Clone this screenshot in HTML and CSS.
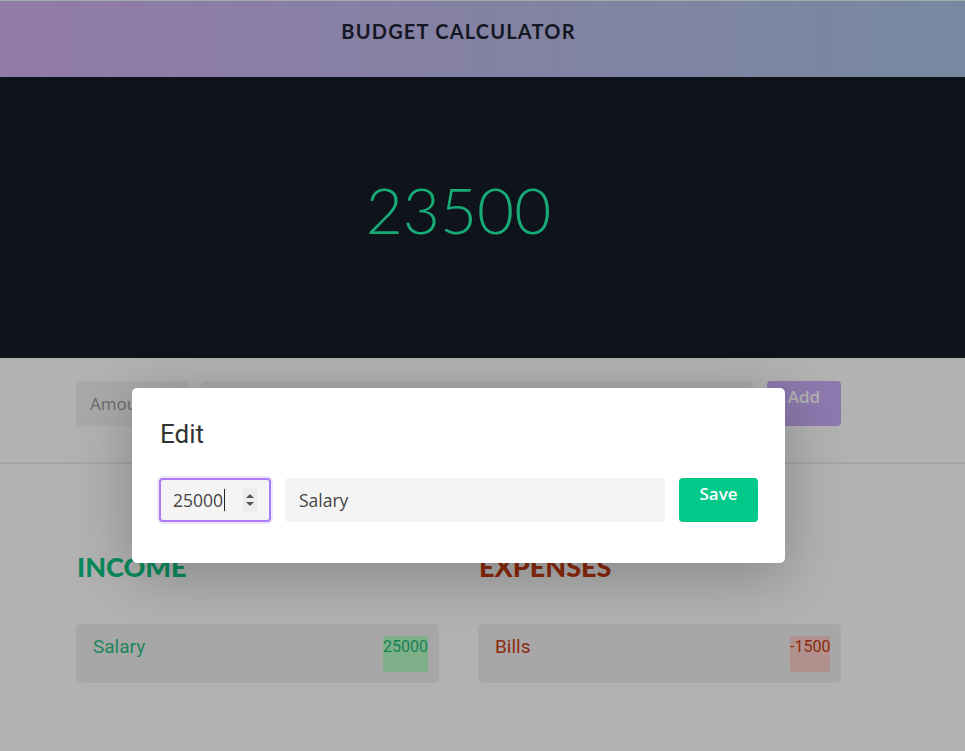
FILE: index.html
```html
<!DOCTYPE html>
<html lang="en">
<head>
<meta charset="utf-8">
<title>Budget Calculator</title>
<link rel="stylesheet" href="styles.css">
</head>
<body>
<header class="topbar">
  <h1 class="title">BUDGET CALCULATOR</h1>
</header>
<section class="hero">
  <div class="total">23500</div>
</section>
<main class="main">
  <form class="add-form">
    <div class="field field-amount"><span class="placeholder">Amount</span></div>
    <div class="field field-desc"></div>
    <div class="btn btn-add">Add</div>
  </form>
  <div class="divider"></div>
  <div class="lists">
    <section class="column">
      <h2 class="heading heading-income">INCOME</h2>
      <div class="card card-income">
        <span class="card-name">Salary</span>
        <span class="badge badge-income">25000</span>
      </div>
    </section>
    <section class="column">
      <h2 class="heading heading-expense">EXPENSES</h2>
      <div class="card card-expense">
        <span class="card-name">Bills</span>
        <span class="badge badge-expense">-1500</span>
      </div>
    </section>
  </div>
  <div class="overlay"></div>
  <div class="modal">
    <h3 class="modal-title">Edit</h3>
    <div class="modal-row">
      <div class="input input-number">
        <span class="value">25000</span><span class="caret"></span>
        <span class="spin"><span class="arrow-up"></span><span class="arrow-down"></span></span>
      </div>
      <div class="input input-text"><span class="value">Salary</span></div>
      <div class="btn btn-save">Save</div>
    </div>
  </div>
</main>
</body>
</html>
```

FILE: styles.css
```css
* { box-sizing: border-box; }
html, body { margin: 0; padding: 0; }
body {
  background: #ffffff;
  font-family: "Open Sans", "Liberation Sans", sans-serif;
  width: 965px;
  height: 751px;
  overflow: hidden;
}

.topbar {
  height: 77px;
  background: linear-gradient(90deg, #927aa9 0%, #8581a4 45%, #7789a0 100%);
  border-top: 1px solid #a2aea4;
  padding-right: 48px;
  display: flex;
  justify-content: center;
}
.title {
  margin: 0;
  padding-top: 18px;
  font-family: Lato, sans-serif;
  font-weight: 700;
  font-size: 20px;
  line-height: 24px;
  letter-spacing: 1.2px;
  color: #141822;
}

.hero {
  height: 281px;
  background: #0f131c;
  padding-right: 48px;
  display: flex;
  justify-content: center;
  align-items: center;
}
.total {
  font-family: Lato, sans-serif;
  font-weight: 300;
  font-size: 64px;
  line-height: 1;
  color: #17ab77;
  margin-top: -16px;
}

.main {
  position: relative;
  height: 393px;
  overflow: hidden;
}

.add-form {
  display: flex;
  gap: 12px;
  margin: 0 0 0 76px;
  padding-top: 23px;
  width: 765px;
  height: 68px;
}
.field {
  height: 45px;
  background: #f2f2f2;
  border-radius: 4px;
  padding: 0 14px;
  display: flex;
  align-items: center;
}
.field-amount { width: 113px; }
.field-desc { width: 552px; }
.placeholder { color: #9a9a9a; font-size: 17px; }
.btn {
  border-radius: 4px;
  color: #ffffff;
  font-weight: 600;
  font-size: 17px;
  line-height: 22px;
  text-align: center;
}
.btn-add {
  width: 74px;
  height: 45px;
  margin-left: 2px;
  padding-top: 5px;
  background: #caaefa;
}

.divider {
  margin-top: 36px;
  height: 2px;
  background: #ebebeb;
}

.lists {
  display: flex;
  gap: 39px;
  margin-left: 76px;
  width: 765px;
  padding-top: 86px;
}
.column { flex: 1; }
.heading {
  margin: 0 0 40px 1px;
  font-family: Lato, sans-serif;
  font-weight: 900;
  font-size: 27px;
  line-height: 34px;
}
.heading-income { color: #0dc784; }
.heading-expense { color: #c93c10; }

.card {
  height: 59px;
  background: #f0f0f0;
  border-radius: 5px;
  padding: 12px 11px 0 17px;
  display: flex;
  justify-content: space-between;
  align-items: flex-start;
  font-family: Roboto, sans-serif;
}
.card-name { font-size: 19px; line-height: 22px; }
.card-income .card-name { color: #2bbf88; }
.card-expense .card-name { color: #cc3d12; }
.badge {
  height: 36px;
  font-size: 16px;
  line-height: 21px;
  border-radius: 2px;
}
.badge-income { background: #b4fbc4; color: #1fba7c; width: 45px; }
.badge-expense { background: #fdd0ca; color: #cc3d12; width: 40px; }

.overlay {
  position: absolute;
  inset: 0;
  background: rgba(0, 0, 0, 0.3);
}

.modal {
  position: absolute;
  top: 30px;
  left: 132px;
  width: 653px;
  height: 175px;
  background: #ffffff;
  border-radius: 5px;
  box-shadow: 0 12px 60px rgba(0, 0, 0, 0.25);
  padding: 32px 27px 0 27px;
}
.modal-title {
  margin: 0 0 0 1px;
  font-family: Roboto, sans-serif;
  font-weight: 400;
  font-size: 26px;
  line-height: 28px;
  color: #333333;
}
.modal-row {
  margin-top: 30px;
  display: flex;
  gap: 14px;
  height: 44px;
}
.input {
  height: 44px;
  background: #f4f4f4;
  border-radius: 4px;
  display: flex;
  align-items: center;
  font-size: 17.5px;
  color: #444444;
}
.input-number {
  width: 112px;
  border: 2px solid #a97cf5;
  box-shadow: 0 0 0 2px #efe6fd;
  padding-left: 12px;
  position: relative;
}
.caret {
  display: inline-block;
  width: 1px;
  height: 22px;
  background: #222;
  margin-left: 1px;
}
.spin {
  position: absolute;
  right: 12px;
  top: 8px;
  width: 14px;
  height: 24px;
  background: #ececec;
  display: flex;
  flex-direction: column;
  align-items: center;
  justify-content: center;
  gap: 4px;
}
.arrow-up {
  width: 0; height: 0;
  border-left: 4px solid transparent;
  border-right: 4px solid transparent;
  border-bottom: 4px solid #555;
}
.arrow-down {
  width: 0; height: 0;
  border-left: 4px solid transparent;
  border-right: 4px solid transparent;
  border-top: 4px solid #555;
}
.input-text {
  width: 380px;
  padding-left: 14px;
}
.btn-save {
  width: 79px;
  height: 44px;
  padding-top: 5px;
  background: #00c98a;
}
```
